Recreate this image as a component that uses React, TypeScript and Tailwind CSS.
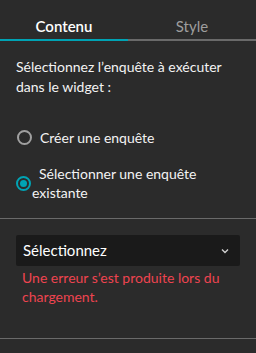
export default function App() {
  return (
    <div className="h-[353px] w-[256px] bg-[#2b2b2b] text-[14px] text-[#f3f3f3]" style={{ fontFamily: "Lato, 'Open Sans', sans-serif" }}>
      <div className="flex h-[41px]">
        <div className="flex flex-1 items-center justify-center border-b-2 border-[#00a3b4] pt-[13px] text-[15px] font-semibold text-white">
          Contenu
        </div>
        <div className="flex flex-1 flex-col">
          <div className="flex flex-1 items-center justify-center pt-[13px] text-[15px] text-[#9e9e9e]">Style</div>
          <div className="h-[2px] bg-[#6a6a6a]" />
        </div>
      </div>
      <div className="border-b border-[#6a6a6a] px-4 pb-[16px] pt-[16px]">
        <p className="leading-[20px]">Sélectionnez l’enquête à exécuter dans le widget :</p>
        <div className="mt-[30px] flex h-[20px] items-center gap-[8px] pl-[1px]">
          <span className="h-[15px] w-[15px] rounded-full border-2 border-[#a0a0a0]" />
          <span>Créer une enquête</span>
        </div>
        <div className="mt-[17px] flex items-center">
          <span className="flex h-[15px] w-[15px] shrink-0 items-center justify-center rounded-full border-2 border-[#00a3b4]">
            <span className="h-[7px] w-[7px] rounded-full bg-[#00a3b4]" />
          </span>
          <span className="ml-[1px] indent-[7px] leading-[19px]">Sélectionner une enquête existante</span>
        </div>
      </div>
      <div className="border-b border-[#6a6a6a] px-4 pb-[32px] pt-[16px]">
        <div className="flex h-[31px] items-center justify-between rounded-[2px] bg-[#1a1a1a] pl-[7px] pr-[11px] text-[15px] text-white">
          <span>Sélectionnez</span>
          <svg width="8" height="6" viewBox="0 0 8 6" fill="none" stroke="#cfcfcf" strokeWidth="1.4">
            <path d="M1 1.5 L4 4.5 L7 1.5" />
          </svg>
        </div>
        <p className="mt-[2px] pl-[6px] leading-[19px] text-[#ee4450]">Une erreur s’est produite lors du chargement.</p>
      </div>
    </div>
  );
}
